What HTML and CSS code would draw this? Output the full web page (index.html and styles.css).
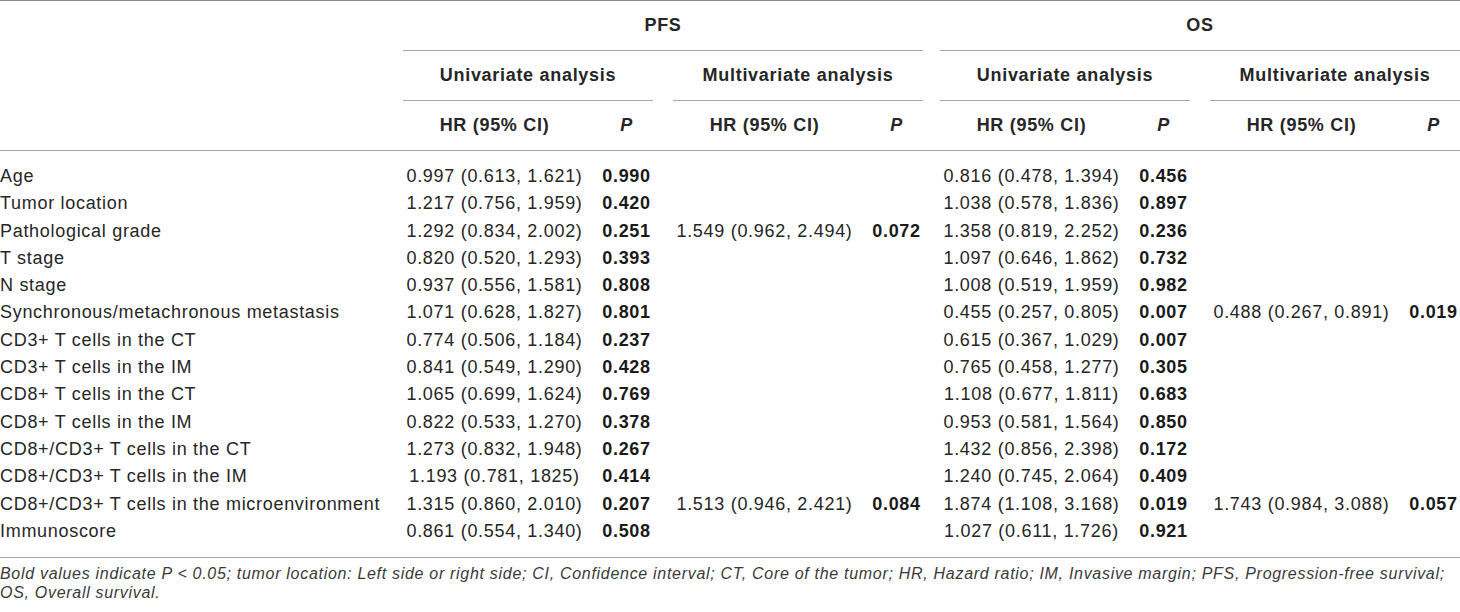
FILE: index.html
```html
<!DOCTYPE html>
<html lang="en">
<head>
<meta charset="utf-8">
<title>Cox regression analysis</title>
<link rel="stylesheet" href="styles.css">
</head>
<body>
<div class="wrap">
<table class="tbl">
  <colgroup>
    <col class="c-label">
    <col class="c-hr"><col class="c-p"><col class="c-gap">
    <col class="c-hr"><col class="c-p"><col class="c-gap2">
    <col class="c-hr"><col class="c-p"><col class="c-gap">
    <col class="c-hr"><col class="c-p">
  </colgroup>
  <thead>
    <tr class="h1">
      <th></th>
      <th colspan="5" class="grp">PFS</th>
      <th></th>
      <th colspan="5" class="grp">OS</th>
    </tr>
    <tr class="h2">
      <th></th>
      <th colspan="2" class="grp">Univariate analysis</th>
      <th></th>
      <th colspan="2" class="grp">Multivariate analysis</th>
      <th></th>
      <th colspan="2" class="grp">Univariate analysis</th>
      <th></th>
      <th colspan="2" class="grp">Multivariate analysis</th>
    </tr>
    <tr class="h3">
      <th></th>
      <th class="hr">HR (95% CI)</th><th class="p"><i>P</i></th><th></th>
      <th class="hr">HR (95% CI)</th><th class="p"><i>P</i></th><th></th>
      <th class="hr">HR (95% CI)</th><th class="p"><i>P</i></th><th></th>
      <th class="hr">HR (95% CI)</th><th class="p"><i>P</i></th>
    </tr>
  </thead>
  <tbody>
    <tr><td class="lbl">Age</td><td class="hr">0.997 (0.613, 1.621)</td><td class="p">0.990</td><td></td><td class="hr"></td><td class="p"></td><td></td><td class="hr">0.816 (0.478, 1.394)</td><td class="p">0.456</td><td></td><td class="hr"></td><td class="p"></td></tr>
    <tr><td class="lbl">Tumor location</td><td class="hr">1.217 (0.756, 1.959)</td><td class="p">0.420</td><td></td><td class="hr"></td><td class="p"></td><td></td><td class="hr">1.038 (0.578, 1.836)</td><td class="p">0.897</td><td></td><td class="hr"></td><td class="p"></td></tr>
    <tr><td class="lbl">Pathological grade</td><td class="hr">1.292 (0.834, 2.002)</td><td class="p">0.251</td><td></td><td class="hr">1.549 (0.962, 2.494)</td><td class="p">0.072</td><td></td><td class="hr">1.358 (0.819, 2.252)</td><td class="p">0.236</td><td></td><td class="hr"></td><td class="p"></td></tr>
    <tr><td class="lbl">T stage</td><td class="hr">0.820 (0.520, 1.293)</td><td class="p">0.393</td><td></td><td class="hr"></td><td class="p"></td><td></td><td class="hr">1.097 (0.646, 1.862)</td><td class="p">0.732</td><td></td><td class="hr"></td><td class="p"></td></tr>
    <tr><td class="lbl">N stage</td><td class="hr">0.937 (0.556, 1.581)</td><td class="p">0.808</td><td></td><td class="hr"></td><td class="p"></td><td></td><td class="hr">1.008 (0.519, 1.959)</td><td class="p">0.982</td><td></td><td class="hr"></td><td class="p"></td></tr>
    <tr><td class="lbl">Synchronous/metachronous metastasis</td><td class="hr">1.071 (0.628, 1.827)</td><td class="p">0.801</td><td></td><td class="hr"></td><td class="p"></td><td></td><td class="hr">0.455 (0.257, 0.805)</td><td class="p">0.007</td><td></td><td class="hr">0.488 (0.267, 0.891)</td><td class="p">0.019</td></tr>
    <tr><td class="lbl">CD3+ T cells in the CT</td><td class="hr">0.774 (0.506, 1.184)</td><td class="p">0.237</td><td></td><td class="hr"></td><td class="p"></td><td></td><td class="hr">0.615 (0.367, 1.029)</td><td class="p">0.007</td><td></td><td class="hr"></td><td class="p"></td></tr>
    <tr><td class="lbl">CD3+ T cells in the IM</td><td class="hr">0.841 (0.549, 1.290)</td><td class="p">0.428</td><td></td><td class="hr"></td><td class="p"></td><td></td><td class="hr">0.765 (0.458, 1.277)</td><td class="p">0.305</td><td></td><td class="hr"></td><td class="p"></td></tr>
    <tr><td class="lbl">CD8+ T cells in the CT</td><td class="hr">1.065 (0.699, 1.624)</td><td class="p">0.769</td><td></td><td class="hr"></td><td class="p"></td><td></td><td class="hr">1.108 (0.677, 1.811)</td><td class="p">0.683</td><td></td><td class="hr"></td><td class="p"></td></tr>
    <tr><td class="lbl">CD8+ T cells in the IM</td><td class="hr">0.822 (0.533, 1.270)</td><td class="p">0.378</td><td></td><td class="hr"></td><td class="p"></td><td></td><td class="hr">0.953 (0.581, 1.564)</td><td class="p">0.850</td><td></td><td class="hr"></td><td class="p"></td></tr>
    <tr><td class="lbl">CD8+/CD3+ T cells in the CT</td><td class="hr">1.273 (0.832, 1.948)</td><td class="p">0.267</td><td></td><td class="hr"></td><td class="p"></td><td></td><td class="hr">1.432 (0.856, 2.398)</td><td class="p">0.172</td><td></td><td class="hr"></td><td class="p"></td></tr>
    <tr><td class="lbl">CD8+/CD3+ T cells in the IM</td><td class="hr">1.193 (0.781, 1825)</td><td class="p">0.414</td><td></td><td class="hr"></td><td class="p"></td><td></td><td class="hr">1.240 (0.745, 2.064)</td><td class="p">0.409</td><td></td><td class="hr"></td><td class="p"></td></tr>
    <tr><td class="lbl">CD8+/CD3+ T cells in the microenvironment</td><td class="hr">1.315 (0.860, 2.010)</td><td class="p">0.207</td><td></td><td class="hr">1.513 (0.946, 2.421)</td><td class="p">0.084</td><td></td><td class="hr">1.874 (1.108, 3.168)</td><td class="p">0.019</td><td></td><td class="hr">1.743 (0.984, 3.088)</td><td class="p">0.057</td></tr>
    <tr><td class="lbl">Immunoscore</td><td class="hr">0.861 (0.554, 1.340)</td><td class="p">0.508</td><td></td><td class="hr"></td><td class="p"></td><td></td><td class="hr">1.027 (0.611, 1.726)</td><td class="p">0.921</td><td></td><td class="hr"></td><td class="p"></td></tr>
  </tbody>
</table>
<p class="note">Bold values indicate P &lt; 0.05; tumor location: Left side or right side; CI, Confidence interval; CT, Core of the tumor; HR, Hazard ratio; IM, Invasive margin; PFS, Progression-free survival; OS, Overall survival.</p>
</div>
</body>
</html>
```

FILE: styles.css
```css
html, body {
  margin: 0;
  padding: 0;
  background: #ffffff;
}

body {
  font-family: "Liberation Sans", Arial, Helvetica, sans-serif;
  color: #262626;
  width: 1460px;
}

.wrap {
  width: 1460px;
}

.tbl {
  width: 1460px;
  border-collapse: collapse;
  table-layout: fixed;
  font-size: 18px;
  letter-spacing: 0.7px;
  border-top: 1px solid #8c8c8c;
}

.c-label { width: 403px; }
.c-hr { width: 197px; }
.c-p { width: 53px; }
.c-gap { width: 20px; }
.c-gap2 { width: 17px; }

.tbl th {
  font-weight: bold;
  text-align: center;
  padding: 0;
  height: 49px;
  vertical-align: middle;
  white-space: nowrap;
}

.tbl .h3 th {
  border-bottom: 1px solid #a6a6a6;
}

.tbl th.grp {
  border-bottom: 1px solid #a6a6a6;
}

.tbl th.hr,
.tbl td.hr {
  padding-right: 14px;
  text-align: center;
}

.tbl th.p i {
  font-style: italic;
}

.tbl td {
  padding: 0;
  height: 27.3px;
  line-height: 27.3px;
  text-align: center;
  white-space: nowrap;
  vertical-align: middle;
}

.tbl td.lbl {
  text-align: left;
}

.tbl td.p {
  font-weight: bold;
  color: #1a1a1a;
}

.tbl tbody tr:first-child td {
  padding-top: 12px;
}

.tbl tbody tr:last-child td {
  padding-bottom: 12px;
  border-bottom: 1px solid #a6a6a6;
}

.note {
  margin: 6px 0 0 0;
  font-size: 16px;
  letter-spacing: 0.7px;
  line-height: 19px;
  font-style: italic;
  color: #3a3a3a;
}
```
